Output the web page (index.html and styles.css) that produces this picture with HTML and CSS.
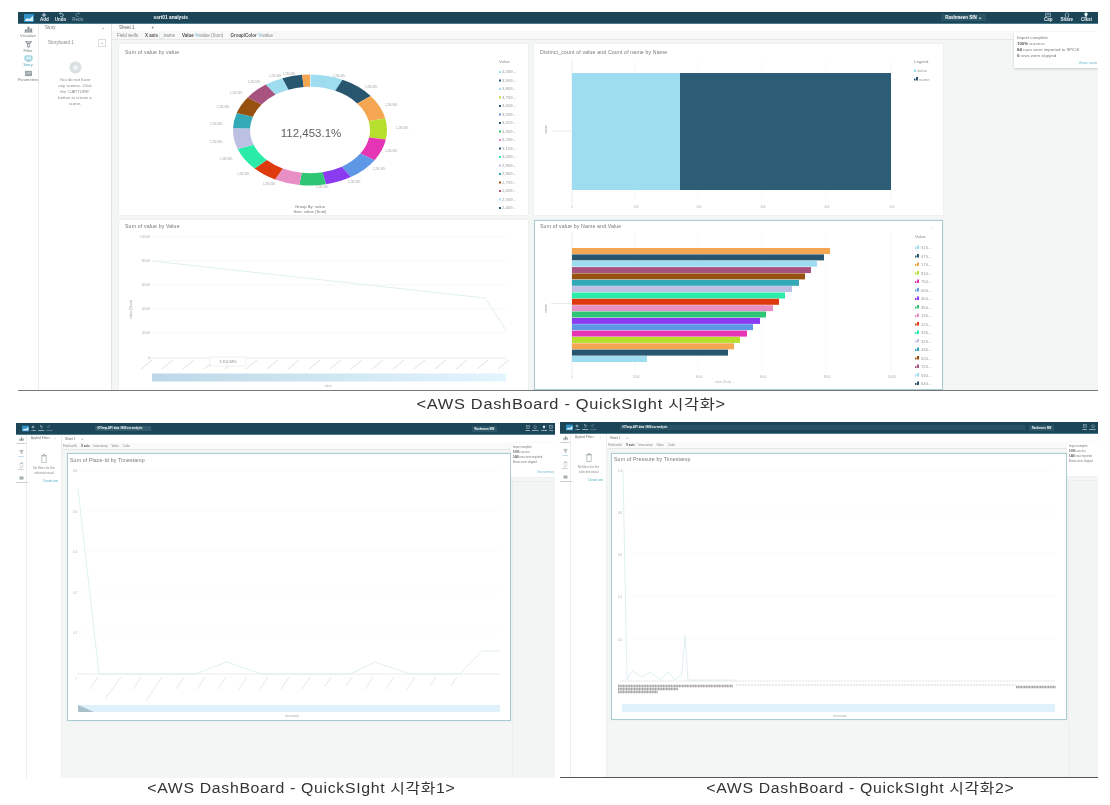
FILE: index.html
```html
<!DOCTYPE html>
<html lang="ko">
<head>
<meta charset="utf-8">
<title>AWS DashBoard - QuickSight</title>
<link rel="stylesheet" href="styles.css">
</head>
<body>
<svg class="defs" width="0" height="0" aria-hidden="true">
  <defs>
    <linearGradient id="scroll-fade" x1="0" x2="1" y1="0" y2="0"><stop offset="0" stop-color="#bcd8e7"/><stop offset="1" stop-color="#e3f5fd"/></linearGradient>
    <symbol id="i-chart" viewBox="0 0 10 8"><rect width="10" height="8" fill="#2f93c9"/><path d="M1 6l2-2 2 1 4-3v5H1z" fill="#d5eefa"/></symbol>
    <symbol id="i-plus" viewBox="0 0 8 8"><path d="M4 1v6M1 4h6" stroke="#dfeef3" stroke-width="1.2"/></symbol>
    <symbol id="i-undo" viewBox="0 0 8 8"><path d="M2 2h3a2 2 0 0 1 0 4H3M2 2l1.500-1.500M2 2l1.500 1.500" stroke="#dfeef3" fill="none" stroke-width=".8"/></symbol>
    <symbol id="i-redo" viewBox="0 0 8 8"><path d="M6 2H3a2 2 0 0 0 0 4h2M6 2L4.500.5M6 2L4.500 3.500" stroke="#7f9dab" fill="none" stroke-width=".8"/></symbol>
    <symbol id="i-cap" viewBox="0 0 8 8"><rect x="1" y="1.500" width="6" height="5" fill="none" stroke="#b9cdd5" stroke-width=".8"/><path d="M1 3.500h6M4 1.500v5" stroke="#b9cdd5" stroke-width=".5"/></symbol>
    <symbol id="i-share" viewBox="0 0 8 8"><path d="M4 .8L7 3.500H6V7H2V3.500H1z" fill="none" stroke="#b9cdd5" stroke-width=".8"/></symbol>
    <symbol id="i-bulb" viewBox="0 0 8 8"><path d="M4 .8a2.300 2.300 0 0 1 1.300 4.200V6H2.700V5A2.300 2.300 0 0 1 4 .8z" fill="#e8f2f5"/><path d="M3 7h2" stroke="#e8f2f5"/></symbol>
    <symbol id="i-vis" viewBox="0 0 10 8"><path d="M1 7V4h2v3zM4 7V1h2v6zM7 7V3h2v4zM0 7.500h10" fill="#8b9498" stroke="#8b9498" stroke-width=".4"/></symbol>
    <symbol id="i-filter" viewBox="0 0 10 8"><path d="M1 .8h8M4 2.500h2V7H4z M2.500 1v1.500h5V1" fill="none" stroke="#7e888c" stroke-width=".9"/></symbol>
    <symbol id="i-story" viewBox="0 0 10 8"><rect x="1" y="1" width="8" height="5" rx="1" fill="#d6eef5" stroke="#4da9bf" stroke-width=".7"/><path d="M3 7.300h4" stroke="#4da9bf" stroke-width=".7"/></symbol>
    <symbol id="i-param" viewBox="0 0 10 8"><rect x="1" y="1" width="8" height="6" fill="#9aa3a7"/><path d="M2 5l2-2 1.500 1L8 2" stroke="#fff" fill="none" stroke-width=".7"/></symbol>
    <symbol id="i-scene" viewBox="0 0 14 14"><circle cx="7" cy="7" r="6.500" fill="#dadfe0"/><circle cx="7" cy="7" r="2.600" fill="#f2f4f4"/></symbol>
    <symbol id="i-trash" viewBox="0 0 8 10"><path d="M1 2h6M3 2V1h2v1M1.800 2.500V9h4.400V2.500z" fill="none" stroke="#a5adb0" stroke-width=".7"/></symbol>
  </defs>
</svg>

<main class="page">
  <figure class="figure figure-top">
    <section class="shot shot-top">
      <header class="topbar">
        <div class="tools">
          <svg class="logo"><use href="#i-chart"/></svg>
          <span class="tool"><svg><use href="#i-plus"/></svg><b>Add</b></span>
          <span class="tool"><svg><use href="#i-undo"/></svg><b>Undo</b></span>
          <span class="tool dim"><svg><use href="#i-redo"/></svg><b>Redo</b></span>
        </div>
        <div class="doc-title">ssrt01 analysis</div>
        <div class="user">Rashmeen SIN ⌄</div>
        <div class="actions">
          <span class="tool"><svg><use href="#i-cap"/></svg><b>Cap</b></span>
          <span class="tool"><svg><use href="#i-share"/></svg><b>Share</b></span>
          <span class="tool"><svg><use href="#i-bulb"/></svg><b>Clkst</b></span>
        </div>
      </header>
      <div class="workspace">
        <nav class="rail">
          <span class="rail-item"><svg><use href="#i-vis"/></svg>Visualize</span>
          <span class="rail-item"><svg><use href="#i-filter"/></svg>Filter</span>
          <span class="rail-item active"><svg><use href="#i-story"/></svg>Story</span>
          <span class="rail-item"><svg><use href="#i-param"/></svg>Parameters</span>
        </nav>
        <aside class="panel">
          <div class="panel-head"><span>Story</span><span>⌄</span></div>
          <div class="panel-row"><span>Storyboard 1</span><span class="panel-btn">⌄</span></div>
          <svg class="scene-icon"><use href="#i-scene"/></svg>
          <p class="panel-note">You do not have<br>any scenes. Click<br>the 'CAPTURE'<br>button to create a<br>scene.</p>
        </aside>
        <div class="content">
          <div class="tabs"><b>Sheet 1</b><span>+</span></div>
          <div class="wells">
            <span>Field wells</span>
            <span><b>X axis</b> <i class="pill">▢</i>name</span>
            <span><b>Value</b> <i class="pill">%</i>value (Sum)</span>
            <span><b>Group/Color</b> <i class="pill">%</i>value</span>
          </div>
          <div class="sheet">
            <div class="grid">
              <article class="card">
                <svg class="chart" viewBox="119 44 409 171">
                  <text class="title" x="125" y="54">Sum of value by value</text>
                  <g transform="translate(310 130) scale(1 .72) rotate(-90)" fill="none" stroke-width="17">
                    <circle r="68.500" pathLength="360" stroke="#9edcf0" stroke-dasharray="25 360" stroke-dashoffset="-0.5"/>
                    <circle r="68.500" pathLength="360" stroke="#28566f" stroke-dasharray="27 360" stroke-dashoffset="-25"/>
                    <circle r="68.500" pathLength="360" stroke="#f5a650" stroke-dasharray="26 360" stroke-dashoffset="-52"/>
                    <circle r="68.500" pathLength="360" stroke="#b6e02d" stroke-dasharray="22 360" stroke-dashoffset="-78"/>
                    <circle r="68.500" pathLength="360" stroke="#e535b4" stroke-dasharray="23 360" stroke-dashoffset="-100"/>
                    <circle r="68.500" pathLength="360" stroke="#5e97e6" stroke-dasharray="25 360" stroke-dashoffset="-123"/>
                    <circle r="68.500" pathLength="360" stroke="#8a3bf0" stroke-dasharray="20 360" stroke-dashoffset="-148"/>
                    <circle r="68.500" pathLength="360" stroke="#2ec674" stroke-dasharray="20 360" stroke-dashoffset="-168"/>
                    <circle r="68.500" pathLength="360" stroke="#e88fc6" stroke-dasharray="19 360" stroke-dashoffset="-188"/>
                    <circle r="68.500" pathLength="360" stroke="#df3a0e" stroke-dasharray="19 360" stroke-dashoffset="-207"/>
                    <circle r="68.500" pathLength="360" stroke="#2beba8" stroke-dasharray="24 360" stroke-dashoffset="-226"/>
                    <circle r="68.500" pathLength="360" stroke="#bcc0e2" stroke-dasharray="22 360" stroke-dashoffset="-250"/>
                    <circle r="68.500" pathLength="360" stroke="#33a9b8" stroke-dasharray="16 360" stroke-dashoffset="-272"/>
                    <circle r="68.500" pathLength="360" stroke="#96500f" stroke-dasharray="18 360" stroke-dashoffset="-288"/>
                    <circle r="68.500" pathLength="360" stroke="#a8527f" stroke-dasharray="19 360" stroke-dashoffset="-306"/>
                    <circle r="68.500" pathLength="360" stroke="#9edcf0" stroke-dasharray="14 360" stroke-dashoffset="-325"/>
                    <circle r="68.500" pathLength="360" stroke="#28566f" stroke-dasharray="15 360" stroke-dashoffset="-339"/>
                    <circle r="68.500" pathLength="360" stroke="#f5a650" stroke-dasharray="6.500 360" stroke-dashoffset="-354"/>
                  </g>
                  <text class="donut-total" x="311" y="137" text-anchor="middle">112,453.1%</text>
                  <g class="slice-label">
                    <text x="333" y="77">1,234.56%</text><text x="365" y="88">1,234.56%</text><text x="385" y="106">1,234.56%</text>
                    <text x="396" y="129">1,234.56%</text><text x="385" y="152">1,234.56%</text><text x="373" y="170">1,234.56%</text>
                    <text x="348" y="183">1,234.56%</text><text x="316" y="188">1,234.56%</text><text x="263" y="185">1,234.56%</text>
                    <text x="237" y="175">1,234.56%</text><text x="220" y="160">1,234.56%</text><text x="210" y="143">1,234.56%</text>
                    <text x="210" y="125">1,234.56%</text><text x="217" y="108">1,234.56%</text><text x="230" y="94">1,234.56%</text>
                    <text x="248" y="83">1,234.56%</text><text x="269" y="77">1,234.56%</text><text x="283" y="75">1,234.56%</text>
                  </g>
                  <text class="sub" x="310" y="208" text-anchor="middle">Group By: value</text>
                  <text class="sub" x="310" y="213" text-anchor="middle">Size: value (Sum)</text>
                  <text class="legend-head" x="499" y="63">Value</text>
                  <g class="legend">
                    <rect x="499" y="71" width="2" height="2" fill="#9edcf0"/><text x="502" y="73">4,059...</text>
                    <rect x="499" y="79.500" width="2" height="2" fill="#28566f"/><text x="502" y="81.500">3,909...</text>
                    <rect x="499" y="88" width="2" height="2" fill="#9edcf0"/><text x="502" y="90">3,809...</text>
                    <rect x="499" y="96.500" width="2" height="2" fill="#b6e02d"/><text x="502" y="98.500">3,759...</text>
                    <rect x="499" y="105" width="2" height="2" fill="#28566f"/><text x="502" y="107">3,609...</text>
                    <rect x="499" y="113.500" width="2" height="2" fill="#5e97e6"/><text x="502" y="115.500">3,559...</text>
                    <rect x="499" y="122" width="2" height="2" fill="#28566f"/><text x="502" y="124">3,429...</text>
                    <rect x="499" y="130.500" width="2" height="2" fill="#2ec674"/><text x="502" y="132.500">3,309...</text>
                    <rect x="499" y="139" width="2" height="2" fill="#e88fc6"/><text x="502" y="141">3,259...</text>
                    <rect x="499" y="147.500" width="2" height="2" fill="#28566f"/><text x="502" y="149.500">3,159...</text>
                    <rect x="499" y="156" width="2" height="2" fill="#2beba8"/><text x="502" y="158">3,059...</text>
                    <rect x="499" y="164.500" width="2" height="2" fill="#bcc0e2"/><text x="502" y="166.500">2,959...</text>
                    <rect x="499" y="173" width="2" height="2" fill="#33a9b8"/><text x="502" y="175">2,909...</text>
                    <rect x="499" y="181.500" width="2" height="2" fill="#96500f"/><text x="502" y="183.500">2,759...</text>
                    <rect x="499" y="190" width="2" height="2" fill="#a8527f"/><text x="502" y="192">2,659...</text>
                    <rect x="499" y="198.500" width="2" height="2" fill="#9edcf0"/><text x="502" y="200.500">2,559...</text>
                    <rect x="499" y="207" width="2" height="2" fill="#28566f"/><text x="502" y="209">2,409...</text>
                  </g>
                </svg>
              </article>

              <article class="card">
                <svg class="chart" viewBox="534 44 409 171">
                  <text class="title" x="540" y="54">Distinct_count of value and Count of name by Name</text>
                  <path class="grid-line" d="M635 60v140M698 60v140M762 60v140M826 60v140M891 60v140"/>
                  <path class="axis-line" d="M572 60v144"/>
                  <rect x="572" y="73" width="108" height="117" fill="#9edcf0"/>
                  <rect x="680" y="73" width="211" height="117" fill="#2c5c76"/>
                  <path class="axis-line" d="M551 131h20"/>
                  <text class="rot" transform="translate(547 134) rotate(-90)">name</text>
                  <g class="tick-label" text-anchor="middle">
                    <text x="572" y="208">0</text><text x="636" y="208">100</text><text x="699" y="208">200</text>
                    <text x="763" y="208">300</text><text x="827" y="208">400</text><text x="892" y="208">500</text>
                  </g>
                  <text class="legend-head" x="914" y="63">Legend</text>
                  <g class="legend">
                    <rect x="914" y="69.500" width="2" height="2.500" fill="#9edcf0"/><text x="917" y="72">value</text>
                    <path d="M914 80.500h1.500v-2h-1.500zM916 80.500h2v-3.500h-2z" fill="#28566f"/><text x="919" y="80.500">name</text>
                  </g>
                </svg>
              </article>

              <article class="card">
                <svg class="chart" viewBox="119 220 409 170">
                  <text class="title" x="125" y="228">Sum of value by Value</text>
                  <path class="grid-line" d="M152 237h354M152 261h354M152 285h354M152 309h354M152 333h354"/>
                  <path class="axis-line" d="M148 358h358"/>
                  <g class="tick-label" text-anchor="end">
                    <text x="150" y="238">100000</text><text x="150" y="262">80000</text><text x="150" y="286">60000</text>
                    <text x="150" y="310">40000</text><text x="150" y="334">20000</text><text x="150" y="359">0</text>
                  </g>
                  <text class="rot" transform="translate(132 319) rotate(-90)">value (Sum)</text>
                  <path class="series" d="M152 261L485 298 506 330"/>
                  <path class="diag" d="M152 360l-11 9m32-9l-11 9m32-9l-11 9m32-9l-11 9m32-9l-11 9m32-9l-11 9m32-9l-11 9m32-9l-11 9m32-9l-11 9m32-9l-11 9m32-9l-11 9m32-9l-11 9m32-9l-11 9m32-9l-11 9m32-9l-11 9m32-9l-11 9m32-9l-11 9m32-9l-11 9"/>
                  <rect class="tip" x="210" y="357" width="36" height="9"/>
                  <text class="tip-text" x="228" y="362.800" text-anchor="middle">3,702.68%</text>
                  <rect class="scroll-grad" x="152" y="373.500" width="354" height="8"/>
                  <text class="tick-label" x="328" y="386.500" text-anchor="middle">value</text>
                </svg>
              </article>

              <article class="card selected">
                <svg class="chart" viewBox="534 220 409 170">
                  <text class="title" x="540" y="228">Sum of value by Name and Value</text>
                  <text class="tick-label" x="930" y="228">…</text>
                  <path class="grid-line" d="M635 232v140M698 232v140M762 232v140M826 232v140M891 232v140"/>
                  <path class="axis-line" d="M572 232v142M551 303.500h20"/>
                  <rect x="572" y="248" width="258" height="6" fill="#f5a650"/>
                  <rect x="572" y="254.400" width="252" height="6" fill="#28566f"/>
                  <rect x="572" y="260.700" width="245" height="6" fill="#9edcf0"/>
                  <rect x="572" y="267.100" width="239" height="6" fill="#a8527f"/>
                  <rect x="572" y="273.400" width="233" height="6" fill="#96500f"/>
                  <rect x="572" y="279.800" width="227" height="6" fill="#33a9b8"/>
                  <rect x="572" y="286.100" width="220" height="6" fill="#bcc0e2"/>
                  <rect x="572" y="292.500" width="213" height="6" fill="#2beba8"/>
                  <rect x="572" y="298.800" width="207" height="6" fill="#df3a0e"/>
                  <rect x="572" y="305.200" width="201" height="6" fill="#e88fc6"/>
                  <rect x="572" y="311.500" width="194" height="6" fill="#2ec674"/>
                  <rect x="572" y="317.900" width="188" height="6" fill="#8a3bf0"/>
                  <rect x="572" y="324.200" width="181" height="6" fill="#5e97e6"/>
                  <rect x="572" y="330.600" width="175" height="6" fill="#e535b4"/>
                  <rect x="572" y="336.900" width="168" height="6" fill="#b6e02d"/>
                  <rect x="572" y="343.300" width="162" height="6" fill="#f5a650"/>
                  <rect x="572" y="349.600" width="156" height="6" fill="#28566f"/>
                  <rect x="572" y="356" width="75" height="6" fill="#9edcf0"/>
                  <text class="rot" transform="translate(547 313) rotate(-90)">name</text>
                  <g class="tick-label" text-anchor="middle">
                    <text x="572" y="378">0</text><text x="636" y="378">2000</text><text x="699" y="378">4000</text>
                    <text x="763" y="378">6000</text><text x="827" y="378">8000</text><text x="892" y="378">10000</text>
                  </g>
                  <text class="tick-label" x="725" y="383" text-anchor="middle">value (Sum) ⌄</text>
                  <text class="legend-head" x="915" y="238">Value</text>
                  <g class="legend">
                    <path d="M915 249h1.500v-2h-1.500zM917 249h2v-3.500h-2z" fill="#9edcf0"/><text x="921" y="249">515...</text>
                    <path d="M915 257.500h1.500v-2h-1.500zM917 257.500h2v-3.500h-2z" fill="#28566f"/><text x="921" y="257.500">475...</text>
                    <path d="M915 266h1.500v-2h-1.500zM917 266h2v-3.500h-2z" fill="#f5a650"/><text x="921" y="266">170...</text>
                    <path d="M915 274.500h1.500v-2h-1.500zM917 274.500h2v-3.500h-2z" fill="#b6e02d"/><text x="921" y="274.500">910...</text>
                    <path d="M915 283h1.500v-2h-1.500zM917 283h2v-3.500h-2z" fill="#e535b4"/><text x="921" y="283">750...</text>
                    <path d="M915 291.500h1.500v-2h-1.500zM917 291.500h2v-3.500h-2z" fill="#5e97e6"/><text x="921" y="291.500">650...</text>
                    <path d="M915 300h1.500v-2h-1.500zM917 300h2v-3.500h-2z" fill="#8a3bf0"/><text x="921" y="300">450...</text>
                    <path d="M915 308.500h1.500v-2h-1.500zM917 308.500h2v-3.500h-2z" fill="#2ec674"/><text x="921" y="308.500">350...</text>
                    <path d="M915 317h1.500v-2h-1.500zM917 317h2v-3.500h-2z" fill="#e88fc6"/><text x="921" y="317">130...</text>
                    <path d="M915 325.500h1.500v-2h-1.500zM917 325.500h2v-3.500h-2z" fill="#df3a0e"/><text x="921" y="325.500">220...</text>
                    <path d="M915 334h1.500v-2h-1.500zM917 334h2v-3.500h-2z" fill="#2beba8"/><text x="921" y="334">330...</text>
                    <path d="M915 342.500h1.500v-2h-1.500zM917 342.500h2v-3.500h-2z" fill="#bcc0e2"/><text x="921" y="342.500">320...</text>
                    <path d="M915 351h1.500v-2h-1.500zM917 351h2v-3.500h-2z" fill="#33a9b8"/><text x="921" y="351">430...</text>
                    <path d="M915 359.500h1.500v-2h-1.500zM917 359.500h2v-3.500h-2z" fill="#96500f"/><text x="921" y="359.500">620...</text>
                    <path d="M915 368h1.500v-2h-1.500zM917 368h2v-3.500h-2z" fill="#a8527f"/><text x="921" y="368">720...</text>
                    <path d="M915 376.500h1.500v-2h-1.500zM917 376.500h2v-3.500h-2z" fill="#9edcf0"/><text x="921" y="376.500">530...</text>
                    <path d="M915 385h1.500v-2h-1.500zM917 385h2v-3.500h-2z" fill="#28566f"/><text x="921" y="385">640...</text>
                  </g>
                </svg>
              </article>
            </div>
          </div>
        </div>
        <div class="toast">
          <div class="toast-title">Import complete</div>
          <div><b>100%</b> success</div>
          <div><b>84</b> rows were imported to SPICE</div>
          <div><b>0</b> rows were skipped</div>
          <a class="toast-link">View sum</a>
        </div>
      </div>
    </section>
    <figcaption class="caption caption-top">&lt;AWS DashBoard - QuickSIght 시각화&gt;</figcaption>
  </figure>

  <div class="lower">
    <figure class="figure figure-left">
      <section class="shot shot-mini">
        <header class="topbar">
          <div class="tools">
            <svg class="logo"><use href="#i-chart"/></svg>
            <span class="tool"><svg><use href="#i-plus"/></svg><b>Add</b></span>
            <span class="tool"><svg><use href="#i-undo"/></svg><b>Undo</b></span>
            <span class="tool dim"><svg><use href="#i-redo"/></svg><b>Redo</b></span>
          </div>
          <div class="doc-title pill-title">IOTmap-API_data_0808 csv analysis</div>
          <div class="user">Rashmeen SIN</div>
          <div class="actions">
            <span class="tool"><svg><use href="#i-cap"/></svg><b>Cap</b></span>
            <span class="tool"><svg><use href="#i-share"/></svg><b>Share</b></span>
            <span class="tool"><svg><use href="#i-bulb"/></svg><b>Clkst</b></span>
            <span class="tool"><svg><use href="#i-cap"/></svg><b>Tls</b></span>
          </div>
        </header>
        <div class="workspace">
          <nav class="rail">
            <span class="rail-item"><svg><use href="#i-vis"/></svg>Visualize</span>
            <span class="rail-item active"><svg><use href="#i-filter"/></svg>Filter</span>
            <span class="rail-item"><svg><use href="#i-trash"/></svg>Story</span>
            <span class="rail-item"><svg><use href="#i-param"/></svg>Parameters</span>
          </nav>
          <aside class="panel">
            <div class="panel-head"><span>Applied Filters</span><span>⌄</span></div>
            <svg class="scene-icon"><use href="#i-trash"/></svg>
            <p class="panel-note">No filters for this<br>selected visual</p>
            <a class="panel-link">Create one</a>
          </aside>
          <div class="content">
            <div class="tabs"><b>Sheet 1</b><span>+</span></div>
            <div class="wells">
              <span>Field wells</span>
              <span><b>X axis</b> <i class="pill">▢</i>timestamp</span>
              <span>Value</span>
              <span>Color</span>
            </div>
            <div class="sheet">
              <article class="card selected">
                <svg class="chart" viewBox="67 454 444 268">
                  <text class="title" x="70" y="463">Sum of Place-Id by Timestamp</text>
                  <path class="grid-line" d="M78 471h422M78 512h422M78 552h422M78 593h422M78 633h422"/>
                  <g class="tick-label" text-anchor="middle">
                    <text x="75" y="472.500">0.8</text><text x="75" y="513.500">0.6</text><text x="75" y="553.500">0.4</text>
                    <text x="75" y="594.500">0.2</text><text x="75" y="635">0.1</text>
                  </g>
                  <path class="axis-line" d="M77 675h423"/>
                  <path class="series" d="M78 490L99 675H195L227 663 262 675H350L375 663 410 675H460L482 652H500"/>
                  <path class="diag" d="M77 678l-2 3M98 678l-8 12M121 678l-16 22M141 678l-8 12M162 678l-16 24M184 678l-8 12M205 678l-8 12M226 678l-8 12M247 678l-8 12M268 678l-8 12M289 678l-8 12M310 678l-8 12M331 678l-6 9M352 678l-6 9M373 678l-8 12M394 678l-8 12M415 678l-8 12M436 678l-6 9M457 678l-6 9"/>
                  <rect class="scroll-flat" x="78" y="706" width="422" height="7"/>
                  <path d="M78 706l16 7H78z" fill="#a9bfcc"/>
                  <text class="tick-label" x="292" y="718" text-anchor="middle">timestamp</text>
                </svg>
              </article>
            </div>
          </div>
          <div class="side-box"></div>
          <div class="toast">
            <div class="toast-title">Import complete</div>
            <div><b>100%</b> success</div>
            <div><b>1440</b> rows were imported</div>
            <div><b>0</b> rows were skipped</div>
            <a class="toast-link">View summary</a>
          </div>
        </div>
      </section>
      <figcaption class="caption caption-left">&lt;AWS DashBoard - QuickSIght 시각화1&gt;</figcaption>
    </figure>

    <figure class="figure figure-right">
      <section class="shot shot-mini shot-ruled">
        <header class="topbar">
          <div class="tools">
            <svg class="logo"><use href="#i-chart"/></svg>
            <span class="tool"><svg><use href="#i-plus"/></svg><b>Add</b></span>
            <span class="tool"><svg><use href="#i-undo"/></svg><b>Undo</b></span>
            <span class="tool dim"><svg><use href="#i-redo"/></svg><b>Redo</b></span>
          </div>
          <div class="doc-title pill-title wide">IOTmap-API_data_0808 csv analysis</div>
          <div class="user">Rashmeen SIN</div>
          <div class="actions">
            <span class="tool"><svg><use href="#i-cap"/></svg><b>Cap</b></span>
            <span class="tool"><svg><use href="#i-share"/></svg><b>Share</b></span>
          </div>
        </header>
        <div class="workspace">
          <nav class="rail">
            <span class="rail-item"><svg><use href="#i-vis"/></svg>Visualize</span>
            <span class="rail-item active"><svg><use href="#i-filter"/></svg>Filter</span>
            <span class="rail-item"><svg><use href="#i-trash"/></svg>Story</span>
            <span class="rail-item"><svg><use href="#i-param"/></svg>Parameters</span>
          </nav>
          <aside class="panel">
            <div class="panel-head"><span>Applied Filters</span><span>⌄</span></div>
            <svg class="scene-icon"><use href="#i-trash"/></svg>
            <p class="panel-note">No filters for this<br>selected visual</p>
            <a class="panel-link">Create one</a>
          </aside>
          <div class="content">
            <div class="tabs"><b>Sheet 1</b><span>+</span></div>
            <div class="wells">
              <span>Field wells</span>
              <span><b>X axis</b> <i class="pill">▢</i>timestamp</span>
              <span>Value</span>
              <span>Color</span>
            </div>
            <div class="sheet">
              <article class="card selected">
                <svg class="chart" viewBox="611 454 456 267">
                  <text class="title" x="614" y="462">Sum of Pressure by Timestamp</text>
                  <path class="grid-line" d="M630 471h425M630 513h425M630 555h425M630 597h425M630 640h425"/>
                  <g class="tick-label" text-anchor="middle">
                    <text x="620" y="472.500">1.0</text><text x="620" y="514.500">0.8</text><text x="620" y="556.500">0.6</text>
                    <text x="620" y="598.500">0.4</text><text x="620" y="641.500">0.2</text>
                  </g>
                  <path class="axis-line" d="M620 682h435"/>
                  <path class="series" d="M623 470L627 681 632 672 642 678 650 673 660 681 668 673 675 681 682 675 685 636 688 681H735"/>
                  <path class="band band-a" d="M618 687h115"/>
                  <path class="band band-a" d="M618 690h60"/>
                  <path class="band band-a" d="M618 693h40"/>
                  <path class="band band-b" d="M736 686h280"/>
                  <path class="band band-a" d="M1016 688h40"/>
                  <rect class="scroll-flat" x="622" y="705" width="433" height="8"/>
                  <text class="tick-label" x="840" y="718" text-anchor="middle">timestamp</text>
                </svg>
              </article>
            </div>
          </div>
          <div class="side-box"></div>
          <div class="toast">
            <div class="toast-title">Import complete</div>
            <div><b>100%</b> success</div>
            <div><b>1440</b> rows imported</div>
            <div><b>0</b> rows were skipped</div>
          </div>
        </div>
      </section>
      <figcaption class="caption caption-right">&lt;AWS DashBoard - QuickSIght 시각화2&gt;</figcaption>
    </figure>
  </div>
</main>
</body>
</html>
```

FILE: styles.css
```css
* { box-sizing: border-box; }
html, body { margin: 0; padding: 0; background: #fff; }
body { width: 1110px; height: 805px; overflow: hidden; font-family: "Liberation Sans", "Noto Sans CJK KR", sans-serif; color: #666; }
.defs { position: absolute; }
figure { margin: 0; }
.page { display: flex; flex-direction: column; padding-top: 12px; }
.figure-top { margin-left: 18px; width: 1080px; }

.shot { display: flex; flex-direction: column; background: #fff; filter: blur(.45px); overflow: hidden; }
.shot-top { height: 379px; border-bottom: 1px solid #777; font-size: 4.500px; }
.shot-mini { height: 355px; font-size: 3px; }
.shot-ruled { height: 356px; border-bottom: 1px solid #555; }

.caption { width: fit-content; font-size: 14px; line-height: 16px; color: #333; filter: blur(.3px); white-space: nowrap; letter-spacing: .6px; transform: scaleX(1.13); }
.caption-top { margin: 5px 0 11px 421px; transform: scaleX(1.17); }
.caption-left { margin: 2px 0 0 149px; }
.caption-right { margin: 2px 0 0 164px; }

.lower { display: flex; margin-left: 16px; gap: 5px; }
.figure-left { width: 539px; }
.figure-right { width: 538px; margin-top: -1px; }

/* top bar */
.topbar { flex: none; height: 12px; background: #1c4558; border-bottom: 1px solid #4b7c8c; display: flex; align-items: center; color: #fff; position: relative; }
.tools { display: flex; align-items: center; gap: 6px; padding-left: 6px; }
.logo { width: 10px; height: 8px; }
.tool { display: flex; flex-direction: column; align-items: center; line-height: 4.500px; font-size: 4.500px; color: #e6f0f4; }
.tool svg { width: 6px; height: 6px; }
.tool.dim { color: #7f9dab; }
.doc-title { margin-left: 68px; font-weight: bold; font-size: 4.800px; padding: 1px 2px; }
.user { margin-left: auto; font-weight: bold; font-size: 4.500px; padding: 1px 4px; background: #2a5567; }
.actions { display: flex; gap: 8px; margin-left: 58px; padding-right: 6px; }

/* workspace */
.workspace { flex: 1; display: flex; min-height: 0; position: relative; }
.rail { flex: none; width: 21px; display: flex; flex-direction: column; align-items: center; gap: 2.500px; padding-top: 2px; border-right: 1px solid #eceeee; font-size: 4px; }
.rail-item { display: flex; flex-direction: column; align-items: center; line-height: 5px; color: #7a8286; white-space: nowrap; }
.rail-item svg { width: 9px; height: 7px; }
.rail-item.active { color: #4da9bf; }
.panel { flex: none; width: 73px; border-right: 1px solid #e4e6e6; display: flex; flex-direction: column; align-items: center; }
.panel-head { align-self: stretch; height: 7px; display: flex; justify-content: space-between; align-items: center; padding: 0 6px; color: #777; }
.panel-row { align-self: stretch; display: flex; justify-content: space-between; align-items: center; height: 9px; margin-top: 7px; padding: 0 5px 0 9px; color: #888; }
.panel-btn { width: 8px; height: 8px; border: 1px solid #ddd; text-align: center; line-height: 6px; }
.scene-icon { width: 13px; height: 13px; margin-top: 14px; }
.panel-note { margin: 3px 0 0; text-align: center; line-height: 6px; color: #8b8b8b; font-size: 4.300px; }
.panel-link { align-self: flex-end; margin: 3px 3px 0 0; color: #4da9bf; }

.content { flex: 1; min-width: 0; display: flex; flex-direction: column; background: #f4f5f5; }
.tabs { flex: none; height: 7px; background: #fff; display: flex; gap: 17px; padding-left: 7px; align-items: center; color: #666; }
.tabs b { font-weight: normal; }
.wells { flex: none; height: 9px; background: #f8f8f8; border-bottom: 1px solid #e6e8e8; display: flex; gap: 6px; padding-left: 5px; align-items: center; color: #888; white-space: nowrap; }
.wells b { color: #555; }
.wells .pill { font-style: normal; color: #6fbccc; }
.wells span + span { margin-left: 1px; }
.sheet { flex: 1; min-height: 0; padding: 4px 0 0 7px; display: flex; }
.grid { display: grid; grid-template-columns: 409px 409px; grid-template-rows: 171px 170px; gap: 5px 6px; }
.card { background: #fff; box-shadow: 0 0 1px #d5d8d8; }
.card.selected { outline: 1.500px solid #a9ccd2; outline-offset: -1px; }
.chart { display: block; width: 100%; height: 100%; overflow: hidden; font-family: "Liberation Sans", sans-serif; }

.title { font-size: 5.200px; fill: #777; letter-spacing: .15px; }
.donut-total { font-size: 11.500px; fill: #606060; }
.slice-label text { font-size: 2.600px; fill: #a0a0a0; }
.sub { font-size: 4.200px; fill: #777; }
.legend-head { font-size: 4.300px; fill: #888; }
.legend text { font-size: 4.200px; fill: #999; }
.tick-label { font-size: 3px; fill: #b0b0b0; }
.rot { font-size: 3.500px; fill: #9a9a9a; }
.grid-line { stroke: #f4f5f5; stroke-width: .7; fill: none; }
.axis-line { stroke: #dfe2e2; stroke-width: .7; fill: none; }
.series { stroke: #dcedf0; stroke-width: .9; fill: none; }
.diag { stroke: #d0d4d4; stroke-width: .7; fill: none; }
.tip { fill: #fff; stroke: #e4e6e6; stroke-width: .6; }
.tip-text { font-size: 3.600px; fill: #888; }
.scroll-grad { fill: url(#scroll-fade); }
.scroll-flat { fill: #dff1fb; }
.band { fill: none; stroke: #a4a4a4; }
.band-a { stroke-width: 2.500; stroke-dasharray: 1.200 .4; }
.band-b { stroke-width: .9; stroke: #d0d0d0; stroke-dasharray: 2 1; }

/* toast */
.toast { position: absolute; top: 8px; right: 0; width: 84px; height: 36px; background: #fff; box-shadow: 0 1px 2px #c8cccc; padding: 3px 0 0 3px; line-height: 6px; color: #7a7a7a; white-space: nowrap; overflow: hidden; font-size: 4.300px; }
.toast b { color: #555; }
.toast-title { color: #777; }
.toast-link { position: absolute; right: 1px; bottom: 2px; color: #6bb8cc; }

/* mini screens */
.shot-mini .topbar { height: 12px; }
.shot-mini .tools { gap: 2px; padding-left: 6px; }
.shot-mini .logo { width: 7px; height: 7px; }
.shot-mini .tool { font-size: 2.500px; line-height: 3px; }
.shot-mini .tool svg { width: 4px; height: 4px; }
.shot-mini .doc-title { margin-left: 42px; font-size: 2.600px; background: #2f5b6d; padding: 1px 3px; width: 56px; white-space: nowrap; overflow: hidden; }
.shot-mini .doc-title.wide { margin-left: 23px; width: 405px; background: #295365; }
.shot-mini .user { font-size: 2.800px; padding: 1px 3px; }
.shot-mini .actions { gap: 2px; margin-left: 28px; padding-right: 2px; }
.figure-right .actions { margin-left: 28px; }
.shot-mini .rail { width: 11px; font-size: 2.500px; gap: 4px; padding-top: 1px; }
.shot-mini .rail-item { line-height: 3px; }
.shot-mini .rail-item svg { width: 5px; height: 6px; }
.shot-mini .panel { width: 35px; border-right-color: #eef0f0; }
.figure-right .panel { width: 36px; }
.shot-mini .panel-head { padding: 0 4px; height: 6px; }
.shot-mini .scene-icon { width: 8px; height: 11px; margin-top: 12px; }
.shot-mini .panel-note { font-size: 3px; line-height: 5px; margin-top: 2px; }
.shot-mini .content { background: #f4f5f5; }
.shot-mini .tabs { height: 8px; padding-left: 3px; gap: 6px; }
.shot-mini .wells { height: 7px; gap: 3px; padding-left: 1px; background: #fafafa; }
.shot-mini .sheet { padding: 3px 0 0 5px; }
.shot-mini .card { flex: none; width: 444px; height: 268px; }
.figure-right .sheet { padding: 4px 0 0 4px; }
.figure-right .card { width: 456px; height: 267px; }
.shot-mini .grid-line { stroke: #f7f8f8; }
.shot-mini .diag { stroke: #dadddd; }
.shot-mini .toast { top: 8px; width: 44px; height: 34px; font-size: 2.600px; line-height: 5px; padding: 2px 0 0 2px; box-shadow: 0 0 1px #ddd; }
.figure-right .toast { width: 31px; }
.shot-mini .side-box { position: absolute; right: 0; top: 46px; width: 43px; bottom: 0; background: #f3f4f4; border-left: 1px solid #eceeee; border-top: 1px solid #eceeee; }
.figure-right .side-box { width: 30px; }
```
